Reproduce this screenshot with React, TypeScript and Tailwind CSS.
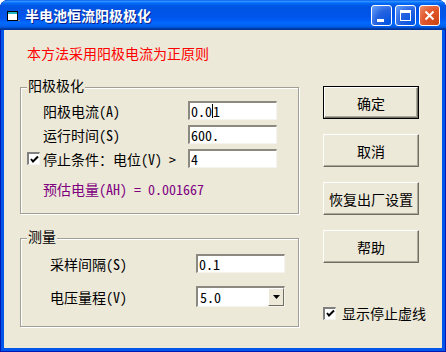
import { FC, ReactNode } from "react";

const txt = "font-['Noto_Sans_Mono_CJK_SC','Noto_Sans_CJK_SC',sans-serif] text-[14px] leading-[16px]";

const Field: FC<{ value: string; caret?: number }> = ({ value, caret }) => {
    const a = caret === undefined ? value : value.slice(0, caret);
    const b = caret === undefined ? "" : value.slice(caret);
    return (
        <div className="w-[89px] h-[19px] bg-white border-t-2 border-l-2 border-b border-r border-t-[#8c8a80] border-l-[#8c8a80] border-b-[#f4f3ee] border-r-[#f4f3ee] flex items-center pl-[1px] text-black">
            <span>{a}</span>
            {caret !== undefined && <span className="w-px h-[14px] bg-black" />}
            <span>{b}</span>
        </div>
    );
};

const Check: FC = () => (
    <div className="w-[13px] h-[13px] bg-white border-t-2 border-l-2 border-b border-r border-t-[#808080] border-l-[#808080] border-b-[#f4f3ee] border-r-[#f4f3ee] flex items-center justify-center shrink-0">
        <svg width="9" height="9" viewBox="0 0 9 9">
            <path d="M1 4 L3 6.5 L8 1.5" fill="none" stroke="#000" strokeWidth="2" />
        </svg>
    </div>
);

const Btn: FC<{ children: ReactNode; def?: boolean }> = ({ children, def }) => (
    <div className={def ? "w-[96px] h-[33px] border border-black" : "w-[96px] h-[33px]"}>
        <div className="w-full h-full bg-[#ece9d8] border-t border-l border-b border-r border-t-white border-l-white border-b-[#716f64] border-r-[#716f64] shadow-[inset_-1px_-1px_0_#aca899] flex items-center justify-center text-black">
            {children}
        </div>
    </div>
);

const Group: FC<{ title: string; h: string; children: ReactNode }> = ({ title, h, children }) => (
    <div className={`relative w-[279px] ${h} border border-[#a09f96] shadow-[inset_1px_1px_0_#fff,1px_1px_0_#fff]`}>
        <span className="absolute left-[6px] -top-[11px] px-[1px] bg-[#ece9d8] text-black">{title}</span>
        {children}
    </div>
);

const App: FC = () => {
    return (
        <div className="w-[446px] h-[352px] bg-[#0055ea] shadow-[inset_0_0_0_1px_#0019b0] rounded-t-[8px] overflow-hidden flex flex-col">
            <div className="h-[30px] shrink-0 flex items-center bg-[linear-gradient(to_bottom,#0058ee_0%,#3593ff_4%,#288eff_6%,#127dff_8%,#036ffc_10%,#0262ee_14%,#0057e5_20%,#0054e3_24%,#0055eb_56%,#005bf5_66%,#026afe_76%,#0062ef_86%,#0052d6_92%,#0040ab_94%,#003092_100%)]">
                <svg width="16" height="16" viewBox="0 0 16 16" className="ml-[5px] mt-[2px]">
                    <rect x="2.5" y="3.5" width="10" height="9" fill="#fff" stroke="#000" />
                    <rect x="3" y="4" width="9" height="2" fill="#1fb3c8" />
                    <rect x="13" y="12" width="2" height="1" fill="#888" />
                </svg>
                <span className="ml-[4px] text-white font-bold font-['Noto_Sans_CJK_SC',sans-serif] text-[14px] leading-[16px] [text-shadow:1px_1px_#0a1e8a]">
                    半电池恒流阳极极化
                </span>
                <div className="ml-auto mr-[6px] flex gap-[3px]">
                    <div className="w-[21px] h-[21px] rounded-[3px] border border-white bg-[radial-gradient(circle_at_90%_90%,#0054e3_0%,#2663e0_55%,#4d88f0_80%,#6ba0ff_100%)] relative">
                        <div className="absolute left-[5px] top-[13px] w-[7px] h-[3px] bg-white" />
                    </div>
                    <div className="w-[21px] h-[21px] rounded-[3px] border border-white bg-[radial-gradient(circle_at_90%_90%,#0054e3_0%,#2663e0_55%,#4d88f0_80%,#6ba0ff_100%)] relative">
                        <div className="absolute left-[4px] top-[4px] w-[11px] h-[11px] border border-white border-t-[3px]" />
                    </div>
                    <div className="w-[21px] h-[21px] rounded-[3px] border border-white bg-[radial-gradient(circle_at_90%_90%,#cc4614_0%,#e2552a_55%,#e77a55_85%,#f29a7c_100%)] flex items-center justify-center">
                        <svg width="11" height="11" viewBox="0 0 11 11">
                            <path d="M1.5 1.5 L9.5 9.5 M9.5 1.5 L1.5 9.5" stroke="#fff" strokeWidth="2" />
                        </svg>
                    </div>
                </div>
            </div>

            <div className={`mx-[4px] mb-[4px] flex-1 bg-[#ece9d8] flex ${txt}`}>
                <div className="pl-[16px] pt-[15px] flex flex-col">
                    <p className="pl-[7px] text-[#ff0000]">本方法采用阳极电流为正原则</p>

                    <div className="mt-[26px]">
                        <Group title="阳极极化" h="h-[127px]">
                            <div className="pl-[6px] pt-[13px] flex flex-col gap-[5px]">
                                <div className="flex items-center">
                                    <div className="w-[16px]" />
                                    <span className="w-[145px]">阳极电流(A)</span>
                                    <Field value="0.01" caret={3} />
                                </div>
                                <div className="flex items-center">
                                    <div className="w-[16px]" />
                                    <span className="w-[145px]">运行时间(S)</span>
                                    <Field value="600." />
                                </div>
                                <div className="flex items-center">
                                    <div className="w-[16px]"><Check /></div>
                                    <span className="w-[145px]">停止条件：电位(V) &gt;</span>
                                    <Field value="4" />
                                </div>
                                <p className="pl-[16px] mt-[8px] text-[#800080]">预估电量(AH) = 0.001667</p>
                            </div>
                        </Group>
                    </div>

                    <div className="mt-[24px]">
                        <Group title="测量" h="h-[89px]">
                            <div className="pl-[29px] pt-[15px] flex flex-col gap-[13px]">
                                <div className="flex items-center">
                                    <span className="w-[146px]">采样间隔(S)</span>
                                    <Field value="0.1" />
                                </div>
                                <div className="flex items-center">
                                    <span className="w-[146px]">电压量程(V)</span>
                                    <div className="w-[89px] h-[21px] bg-white border-t-2 border-l-2 border-b border-r border-t-[#8c8a80] border-l-[#8c8a80] border-b-[#f4f3ee] border-r-[#f4f3ee] flex items-center">
                                        <span className="pl-[2px] flex-1">5.0</span>
                                        <div className="w-[16px] h-full bg-[#ece9d8] border border-t-white border-l-white border-b-[#716f64] border-r-[#716f64] flex items-center justify-center">
                                            <svg width="7" height="4" viewBox="0 0 7 4">
                                                <path d="M0 0 H7 L3.5 4 Z" fill="#000" />
                                            </svg>
                                        </div>
                                    </div>
                                </div>
                            </div>
                        </Group>
                    </div>
                </div>

                <div className="ml-[24px] pt-[56px] flex flex-col gap-[15px]">
                    <Btn def>确定</Btn>
                    <Btn>取消</Btn>
                    <Btn>恢复出厂设置</Btn>
                    <Btn>帮助</Btn>
                    <div className="mt-[27px] flex items-center gap-[6px]">
                        <Check />
                        <span>显示停止虚线</span>
                    </div>
                </div>
            </div>
        </div>
    );
};

export default App;
